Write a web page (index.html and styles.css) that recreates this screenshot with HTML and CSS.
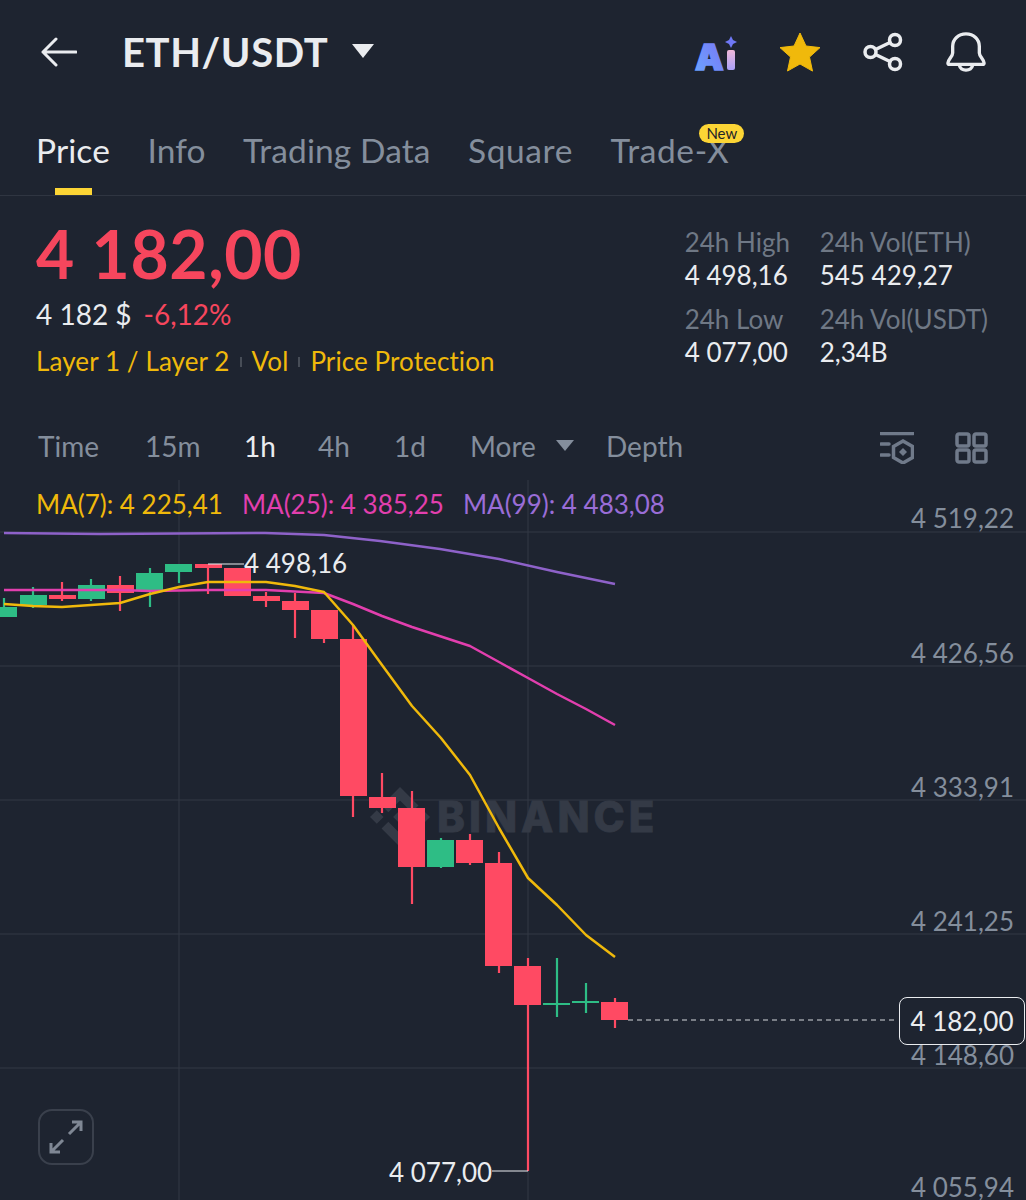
FILE: index.html
```html
<!DOCTYPE html>
<html lang="en">
<head>
    <meta charset="UTF-8">
    <meta name="viewport" content="width=device-width, initial-scale=1.0">
    <title>ETH/USDT</title>
    <link rel="stylesheet" href="styles.css">
</head>
<body>
    <div class="screen">
        <div class="header">
            <svg class="back-icon" width="36" height="30" viewBox="0 0 36 30"><path d="M35 15H2M15 2L2 15l13 13"/></svg>
            <h1 class="pair">ETH/USDT</h1>
            <span class="pair-caret"></span>
            <div class="header-icons">
                <svg class="ai-icon" width="44" height="42" viewBox="0 0 44 42">
                    <defs>
                        <linearGradient id="aiA" x1="0" y1="1" x2="1" y2="0"><stop offset="0" stop-color="#6aa8ff"/><stop offset="1" stop-color="#7a72f5"/></linearGradient>
                        <linearGradient id="aiI" x1="0" y1="0" x2="0" y2="1"><stop offset="0" stop-color="#f0b8d8"/><stop offset="1" stop-color="#a9a0f8"/></linearGradient>
                    </defs>
                    <text class="ai-a" x="1" y="39" fill="url(#aiA)" stroke="url(#aiA)">A</text>
                    <rect x="33" y="19" width="8" height="20" rx="2" fill="url(#aiI)"/>
                    <path d="M37 5l2 4 4 2-4 2-2 4-2-4-4-2 4-2z" fill="#6f78f6"/>
                </svg>
                <svg width="42" height="40" viewBox="0 0 42 40"><path d="M21 1l6 13 14 1.600-10.500 9.500 3 14L21 32l-12.500 7 3-14L1 15.600 15 14z" fill="#f0b90b" stroke="#f0b90b" stroke-linejoin="round"/></svg>
                <svg class="line-icon share-icon" width="40" height="40" viewBox="0 0 40 40"><circle cx="7.500" cy="20" r="5.500"/><circle cx="32" cy="8" r="5.500"/><circle cx="32" cy="32" r="5.500"/><path d="M12.500 17.500L27 10.500M12.500 22.500L27 29.500"/></svg>
                <svg class="line-icon bell-icon" width="40" height="42" viewBox="0 0 42 42"><path d="M7 22V15C7 7.500 13 2 21 2s14 5.500 14 13v7c0 4 5 7 5 10.500 0 1-.8 1.500-1.500 1.500H3.500C2.800 34 2 33.500 2 32.500 2 29 7 26 7 22z"/><path d="M14 35c1 3.500 4 5 7 5s6-1.500 7-5"/></svg>
            </div>
        </div>

        <div class="tabs">
            <span class="tab active">Price</span>
            <span class="tab">Info</span>
            <span class="tab">Trading Data</span>
            <span class="tab tab-wide">Square</span>
            <span class="tab tab-wide">Trade-X<span class="badge">New</span></span>
        </div>

        <div class="summary">
            <div class="summary-left">
                <div class="last-price">4 182,00</div>
                <div class="fiat-row"><span class="fiat">4 182 $</span><span class="change">-6,12%</span></div>
                <div class="tags">
                    <span>Layer 1 / Layer 2</span><i class="tag-sep"></i><span>Vol</span><i class="tag-sep"></i><span>Price Protection</span>
                </div>
            </div>
            <div class="stats">
                <div class="stat"><div class="stat-label">24h High</div><div class="stat-value">4 498,16</div></div>
                <div class="stat"><div class="stat-label">24h Vol(ETH)</div><div class="stat-value">545 429,27</div></div>
                <div class="stat"><div class="stat-label">24h Low</div><div class="stat-value">4 077,00</div></div>
                <div class="stat"><div class="stat-label">24h Vol(USDT)</div><div class="stat-value">2,34B</div></div>
            </div>
        </div>

        <div class="intervals">
            <span class="iv iv-time">Time</span>
            <span class="iv iv-15m">15m</span>
            <span class="iv iv-1h active">1h</span>
            <span class="iv iv-4h">4h</span>
            <span class="iv iv-1d">1d</span>
            <span class="iv iv-more">More<span class="more-caret"></span></span>
            <span class="iv">Depth</span>
            <div class="interval-icons">
                <svg class="tool-icon" width="34" height="32" viewBox="0 0 34 32"><path d="M1 1.500h32M1 12h8M1 23h8"/><path d="M23 9l9.500 5.500v11L23 31l-9.500-5.500v-11z"/><path class="tool-dot" d="M23 16l4 4-4 4-4-4z"/></svg>
                <svg class="tool-icon" width="33" height="32" viewBox="0 0 33 32"><rect x="2" y="2" width="12" height="12" rx="2"/><rect x="19" y="2" width="12" height="12" rx="2"/><rect x="2" y="18" width="12" height="12" rx="2"/><rect x="19" y="18" width="12" height="12" rx="2"/></svg>
            </div>
        </div>

        <div class="chart">
            <div class="ma-row">
                <span class="ma7">MA(7): 4 225,41</span>
                <span class="ma25">MA(25): 4 385,25</span>
                <span class="ma99">MA(99): 4 483,08</span>
            </div>

            <svg class="plot" width="1026" height="720" viewBox="0 480 1026 720">
                <g class="grid">
                    <path d="M0 532H1026M0 666H1026M0 800H1026M0 934H1026M0 1068H1026"/>
                    <path d="M179 480V1200M528 480V1200"/>
                </g>

                <g class="mark">
                    <path class="watermark-logo" transform="translate(370 787) scale(.474)" d="M38.730 53.200l24.590-24.580 24.600 24.600 14.300-14.310L63.320 0 24.430 38.900zM0 63.310l14.300-14.310 14.310 14.310-14.310 14.300zM38.730 73.410l24.590 24.590 24.600-24.600 14.310 14.290-38.900 38.910-38.910-38.880-.020-.020zM98 63.310l14.300-14.310 14.310 14.300-14.310 14.320zM77.830 63.300L63.320 48.780 48.810 63.280l14.510 14.500 14.510-14.470z"/>
                    <text class="watermark" x="437" y="832">BINANCE</text>
                </g>

                <g class="up">
                    <path class="wick" d="M4 598V617M33 587V608M91 579V601M150 568V607M179 564V583M441 838V868M557 958V1017M586 983V1013"/>
                    <rect x="-10" y="607" width="27" height="10"/>
                    <rect x="20" y="595" width="27" height="10"/>
                    <rect x="78" y="585" width="27" height="14"/>
                    <rect x="136" y="573" width="27" height="18"/>
                    <rect x="165" y="564" width="27" height="8"/>
                    <rect x="427" y="840" width="27" height="27"/>
                    <rect x="543" y="1003" width="27" height="2"/>
                    <rect x="572" y="1001" width="27" height="2"/>
                </g>
                <g class="down">
                    <path class="wick" d="M62 582V601M120 576V611M208 564V594M266 592V607M295 593V638M324 610V643M353 625V817M382 773V813M412 791V904M470 834V865M499 852V973M528 958V1171M615 998V1028"/>
                    <rect x="49" y="595" width="27" height="4"/>
                    <rect x="107" y="585" width="27" height="8"/>
                    <rect x="195" y="564" width="27" height="4"/>
                    <rect x="224" y="568" width="27" height="28"/>
                    <rect x="253" y="596" width="27" height="5"/>
                    <rect x="282" y="601" width="27" height="9"/>
                    <rect x="311" y="610" width="27" height="29"/>
                    <rect x="340" y="639" width="27" height="157"/>
                    <rect x="369" y="797" width="27" height="11"/>
                    <rect x="398" y="808" width="27" height="59"/>
                    <rect x="456" y="840" width="27" height="23"/>
                    <rect x="485" y="863" width="27" height="103"/>
                    <rect x="514" y="966" width="27" height="39"/>
                    <rect x="601" y="1002" width="27" height="18"/>
                </g>

                <polyline class="line-ma99" points="4,533 100,534 265,533 324,535 380,541 440,549 499,559 557,572 615,584"/>
                <polyline class="line-ma25" points="4,590 120,590 150,591 208,590 266,590 324,593 353,604 382,616 412,627 470,646 499,662 528,678 557,694 586,709 615,725"/>
                <polyline class="line-ma7" points="4,604 33,606 62,607 120,603 150,594 179,587 208,582 266,582 295,586 324,592 353,625 382,665 412,706 441,738 470,775 499,828 528,878 557,905 586,935 615,957"/>

                <path class="leader" d="M208 564H244M492 1171H528"/>
                <path class="price-line" d="M628 1020H898"/>
            </svg>

            <span class="hl-label hl-high">4 498,16</span>
            <span class="hl-label hl-low">4 077,00</span>

            <span class="axis-label axis-1">4 519,22</span>
            <span class="axis-label axis-2">4 426,56</span>
            <span class="axis-label axis-3">4 333,91</span>
            <span class="axis-label axis-4">4 241,25</span>
            <span class="axis-label axis-5">4 148,60</span>
            <span class="axis-label axis-6">4 055,94</span>
            <span class="current-price">4 182,00</span>

            <div class="expand-btn">
                <svg width="36" height="36" viewBox="0 0 36 36"><path d="M21 15l12-12M24 3h9v9M15 21L3 33M12 33H3V24"/></svg>
            </div>
        </div>
    </div>
</body>
</html>
```

FILE: styles.css
```css
* {
    margin: 0;
    padding: 0;
    box-sizing: border-box;
}

body {
    font-family: "Lato", "Liberation Sans", sans-serif;
    background: #1e2430;
    color: #eaecef;
}

.screen {
    width: 1026px;
    height: 1200px;
    overflow: hidden;
    background: #1e2430;
}

/* top bar */
.header {
    display: flex;
    align-items: center;
    height: 104px;
    padding: 0 40px 0 41px;
}

.back-icon {
    fill: none;
    stroke: #eaecef;
    stroke-width: 3;
    stroke-linecap: round;
    stroke-linejoin: round;
}

.pair {
    margin-left: 45px;
    font-size: 40px;
    font-weight: 700;
    letter-spacing: 0.6px;
    color: #eaecef;
}

.pair-caret {
    margin-left: 24px;
    margin-top: -3px;
    border-left: 11px solid transparent;
    border-right: 11px solid transparent;
    border-top: 14px solid #eaecef;
}

.header-icons {
    display: flex;
    align-items: center;
    gap: 41px;
    margin-left: auto;
}

.ai-a {
    font-family: "Inter", sans-serif;
    font-size: 36px;
    font-weight: 900;
    stroke-width: 1.5;
}

.line-icon {
    fill: none;
    stroke: #eaecef;
    stroke-width: 3.500;
    stroke-linecap: round;
    stroke-linejoin: round;
}

.share-icon {
    margin-left: 1px;
}

.bell-icon {
    margin-left: 2px;
}

/* tabs */
.tabs {
    display: flex;
    gap: 37.500px;
    height: 92px;
    padding: 23px 0 0 36px;
    border-bottom: 1px solid #2f3541;
}

.tab {
    position: relative;
    font-size: 33.500px;
    letter-spacing: 0.1px;
    line-height: 46px;
    color: #848e9c;
}

.tab-wide {
    letter-spacing: 0.6px;
}

.tab.active {
    color: #eaecef;
}

.tab.active::after {
    content: "";
    position: absolute;
    left: 19px;
    width: 37px;
    top: 61px;
    height: 7px;
    background: #fcd535;
}

.badge {
    position: absolute;
    right: -15px;
    top: -3px;
    height: 19px;
    padding: 0 7px;
    border-radius: 10px;
    background: #fcd535;
    color: #1e2329;
    font-size: 15px;
    letter-spacing: 0;
    line-height: 19px;
}

/* price summary */
.summary {
    display: flex;
    justify-content: space-between;
    height: 218px;
    padding: 25px 38px 0 36px;
}

.last-price {
    font-size: 66px;
    font-weight: 700;
    letter-spacing: 0.6px;
    line-height: 66px;
    color: #f6465d;
}

.fiat-row {
    display: flex;
    gap: 12px;
    margin-top: 9px;
    font-size: 28px;
    line-height: 36px;
}

.change {
    color: #f6465d;
}

.tags {
    display: flex;
    align-items: center;
    margin-top: 11px;
    font-size: 26px;
    letter-spacing: 0.1px;
    line-height: 36px;
    color: #f0b90b;
}

.tag-sep {
    width: 2px;
    height: 10px;
    margin: 2px 10px 0;
    background: #474d57;
}

.stats {
    display: grid;
    grid-template-columns: 135px auto;
    grid-auto-rows: 77px;
    margin-top: 5px;
}

.stat-label {
    font-size: 26px;
    line-height: 33px;
    color: #6f7885;
}

.stat-value {
    font-size: 26px;
    line-height: 33px;
    color: #eaecef;
}

/* interval row */
.intervals {
    display: flex;
    align-items: center;
    height: 67px;
    padding: 0 38px 4px;
    font-size: 28px;
    color: #848e9c;
}

.iv-time { width: 107px; }
.iv-15m { width: 99px; }
.iv-1h { width: 74px; }
.iv-4h { width: 76px; }
.iv-1d { width: 76px; }
.iv-more { width: 136px; display: flex; align-items: center; }

.iv.active {
    color: #eaecef;
}

.more-caret {
    margin-left: 20px;
    border-left: 9px solid transparent;
    border-right: 9px solid transparent;
    border-top: 11px solid #848e9c;
}

.interval-icons {
    display: flex;
    align-items: center;
    gap: 41px;
    margin-left: auto;
    margin-top: 4px;
}

.tool-icon {
    fill: none;
    stroke: #707a8a;
    stroke-width: 3.500;
    stroke-linecap: round;
}

.tool-dot {
    fill: #707a8a;
    stroke: none;
}

/* chart */
.chart {
    position: relative;
    height: 719px;
}

.ma-row {
    position: relative;
    z-index: 1;
    display: flex;
    gap: 19px;
    padding: 6px 0 0 36px;
    font-size: 26px;
    line-height: 34px;
}

.ma7 { color: #f0b90b; }
.ma25 { color: #e23fae; }
.ma99 { color: #9a6dd7; }

.plot {
    position: absolute;
    left: 0;
    top: -1px;
}

.grid path {
    fill: none;
    stroke: #323844;
    stroke-width: 1;
}

.up rect { fill: #2ebd85; }
.down rect { fill: #ff4a63; }

.wick {
    fill: none;
    stroke-width: 2.200;
}

.up .wick { stroke: #2ebd85; }
.down .wick { stroke: #ff4a63; }

.line-ma99, .line-ma25, .line-ma7 {
    fill: none;
    stroke-width: 2.500;
    stroke-linejoin: round;
}

.line-ma99 { stroke: #8e62c9; }
.line-ma25 { stroke: #e23fae; }
.line-ma7 { stroke: #f0b90b; }

.watermark {
    font-family: "Inter", sans-serif;
    font-size: 42px;
    font-weight: 800;
    letter-spacing: 4px;
    fill: #343a46;
    stroke: #343a46;
    stroke-width: 0.800;
}

.watermark-logo {
    fill: #343a46;
}

.leader {
    fill: none;
    stroke: #eaecef;
    stroke-width: 1;
}

.price-line {
    fill: none;
    stroke: #d5d8dc;
    stroke-width: 1;
    stroke-dasharray: 5 4;
}

.hl-label {
    position: absolute;
    font-size: 26px;
    line-height: 34px;
    color: #eaecef;
}

.hl-high { left: 244px; top: 65px; }
.hl-low { left: 389px; top: 674px; }

.axis-label {
    position: absolute;
    right: 12px;
    font-size: 26px;
    line-height: 32px;
    color: #848e9c;
}

.axis-1 { top: 21px; }
.axis-2 { top: 156px; }
.axis-3 { top: 290px; }
.axis-4 { top: 424px; }
.axis-5 { top: 558px; }
.axis-6 { top: 690px; }

.current-price {
    position: absolute;
    left: 899px;
    top: 516px;
    width: 126px;
    height: 48px;
    border: 1px solid #eaecef;
    border-radius: 8px;
    background: #1e2430;
    color: #eaecef;
    font-size: 26px;
    line-height: 46px;
    text-align: center;
}

.expand-btn {
    position: absolute;
    left: 38px;
    top: 628px;
    width: 56px;
    height: 56px;
    display: flex;
    align-items: center;
    justify-content: center;
    border: 2px solid #3a404c;
    border-radius: 14px;
}

.expand-btn svg {
    fill: none;
    stroke: #7f8794;
    stroke-width: 3;
}
```
